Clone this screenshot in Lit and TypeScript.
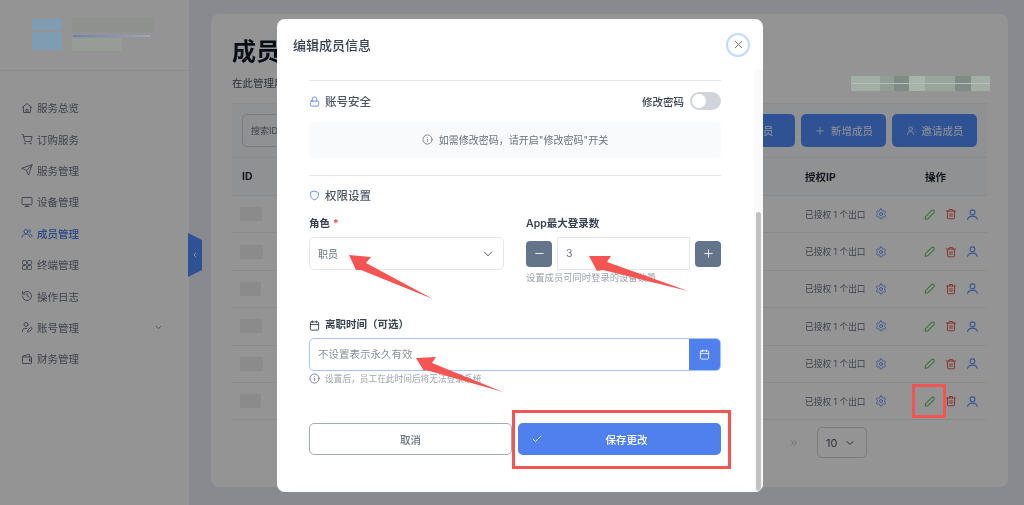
import { html, svg, css, LitElement } from 'lit';
import { customElement } from 'lit/decorators.js';

const icon = (inner: unknown, size = 12, sw = 2) => html`<svg class="ico" width=${size} height=${size} viewBox="0 0 24 24" fill="none" stroke="currentColor" stroke-width=${sw} stroke-linecap="round" stroke-linejoin="round">${inner}</svg>`;

const paths = {
  home: svg`<path d="M3 10.5 12 3l9 7.5"/><path d="M5 9v11a1 1 0 0 0 1 1h12a1 1 0 0 0 1-1V9"/><path d="M10 21v-6h4v6"/>`,
  cart: svg`<circle cx="8" cy="21" r="1"/><circle cx="19" cy="21" r="1"/><path d="M2 3h2.5l2.6 12.4a2 2 0 0 0 2 1.6h9.3a2 2 0 0 0 2-1.6L22 7H5.2"/>`,
  send: svg`<path d="m22 2-7 20-4-9-9-4Z"/><path d="M22 2 11 13"/>`,
  monitor: svg`<rect x="2" y="3" width="20" height="14" rx="2"/><path d="M8 21h8"/><path d="M12 17v4"/>`,
  users: svg`<circle cx="10" cy="9" r="4"/><path d="M2 20c1-4 4-6 8-6s7 2 8 6"/><path d="M16 5a4 4 0 0 1 1 7"/><path d="M19 14c1.500 1 2.500 3 3 5"/>`,
  grid: svg`<rect x="3" y="3" width="8" height="8" rx="2"/><rect x="13" y="3" width="8" height="8" rx="2"/><rect x="3" y="13" width="8" height="8" rx="2"/><rect x="13" y="13" width="8" height="8" rx="2"/>`,
  history: svg`<path d="M3 12a9 9 0 1 0 9-9 9.75 9.75 0 0 0-6.74 2.74L3 8"/><path d="M3 3v5h5"/><path d="M12 7v5l4 2"/>`,
  userPen: svg`<path d="M11.500 15H7a4 4 0 0 0-4 4v2"/><path d="M21.378 16.626a1 1 0 0 0-3.004-3.004l-4.010 4.012a2 2 0 0 0-.506.854l-.837 2.870a.5.5 0 0 0 .620.620l2.870-.837a2 2 0 0 0 .854-.506z"/><circle cx="10" cy="7" r="4"/>`,
  wallet: svg`<path d="M3 8h17a1 1 0 0 1 1 1v11a1 1 0 0 1-1 1H4a1 1 0 0 1-1-1V8Z"/><path d="M3 8c0-1 1-2 2-2.500L15 3h2v5"/><path d="M21 12h-4v4h4"/>`,
  chevronDown: svg`<path d="m6 9 6 6 6-6"/>`,
  chevronLeft: svg`<path d="m15 18-6-6 6-6"/>`,
  chevrons: svg`<path d="m6 17 5-5-5-5"/><path d="m13 17 5-5-5-5"/>`,
  plus: svg`<path d="M5 12h14"/><path d="M12 5v14"/>`,
  minus: svg`<path d="M5 12h14"/>`,
  userPlus: svg`<circle cx="10" cy="8" r="4"/><path d="M3 21a7 7 0 0 1 14 0"/><path d="M20 9v.01"/><path d="M20 14v.01"/>`,
  pencil: svg`<path d="M4 20.500l.8-4.500L16 4.800a2.800 2.800 0 0 1 4 4L8.800 20z"/>`,
  trash: svg`<path d="M3 6h18"/><path d="M9 6V3h6v3"/><path d="M5 6v14a1.500 1.500 0 0 0 1.500 1.500h11A1.500 1.500 0 0 0 19 20V6"/><path d="M10 11v6"/><path d="M14 11v6"/>`,
  user: svg`<circle cx="12" cy="8" r="4.500"/><path d="M3 21c1-4 4.500-6 9-6s8 2 9 6"/>`,
  gear: svg`<path d="M12.220 2h-.44a2 2 0 0 0-2 2v.18a2 2 0 0 1-1 1.730l-.43.25a2 2 0 0 1-2 0l-.15-.08a2 2 0 0 0-2.730.73l-.22.38a2 2 0 0 0 .73 2.730l.15.1a2 2 0 0 1 1 1.720v.51a2 2 0 0 1-1 1.740l-.15.09a2 2 0 0 0-.73 2.730l.22.38a2 2 0 0 0 2.730.73l.15-.08a2 2 0 0 1 2 0l.43.25a2 2 0 0 1 1 1.730V20a2 2 0 0 0 2 2h.44a2 2 0 0 0 2-2v-.18a2 2 0 0 1 1-1.730l.43-.25a2 2 0 0 1 2 0l.15.08a2 2 0 0 0 2.730-.73l.22-.39a2 2 0 0 0-.73-2.730l-.15-.08a2 2 0 0 1-1-1.740v-.5a2 2 0 0 1 1-1.740l.15-.09a2 2 0 0 0 .73-2.730l-.22-.38a2 2 0 0 0-2.730-.73l-.15.08a2 2 0 0 1-2 0l-.43-.25a2 2 0 0 1-1-1.730V4a2 2 0 0 0-2-2z"/><circle cx="12" cy="12" r="3"/>`,
  x: svg`<path d="M18 6 6 18"/><path d="m6 6 12 12"/>`,
  lock: svg`<rect x="3" y="11" width="18" height="11" rx="3"/><path d="M7 11V7a5 5 0 0 1 10 0v4"/>`,
  shield: svg`<path d="M12 2.500 20.500 5.500v6c0 5-3.500 8.500-8.500 10-5-1.500-8.500-5-8.500-10v-6z"/>`,
  info: svg`<circle cx="12" cy="12" r="10"/><path d="M12 16v-4"/><path d="M12 8h.01"/>`,
  calendar: svg`<path d="M8 2v4"/><path d="M16 2v4"/><rect x="3" y="4" width="18" height="18" rx="2"/><path d="M3 10h18"/>`,
  check: svg`<path d="M20 6 9 17l-5-5"/>`,
};

const nav = [
  ['服务总览', paths.home],
  ['订购服务', paths.cart],
  ['服务管理', paths.send],
  ['设备管理', paths.monitor],
  ['成员管理', paths.users],
  ['终端管理', paths.grid],
  ['操作日志', paths.history],
  ['账号管理', paths.userPen],
  ['财务管理', paths.wallet],
];

const idWidths = [22, 23, 21, 22, 23, 21];

@customElement('app-root')
export class AppRoot extends LitElement {
  static styles = css`
    :host {
      display: block;
      width: 1024px;
      height: 505px;
      overflow: hidden;
      position: relative;
      font-family: Inter, "Noto Sans CJK SC", sans-serif;
      background: #eceef9;
      color: #374151;
      filter: blur(0.35px);
    }
    .ico { display: block; flex: none; }
    .page { display: flex; height: 505px; }

    /* sidebar */
    .side { width: 189px; flex: none; background: #fff; position: relative; }
    .brand { height: 71px; border-bottom: 1px solid #f0f1f3; box-sizing: border-box; }
    .nav { padding-top: 21px; }
    .nav-item {
      height: 31.4px;
      padding-left: 21px;
      padding-right: 26px;
      display: flex;
      align-items: center;
      gap: 4px;
      font-size: 10.500px;
      color: #6b7280;
    }
    .nav-item.on { color: #4a7be6; font-weight: 500; }
    .nav-item .grow { flex: 1; }
    .tab {
      position: absolute;
      left: 188px;
      top: 233px;
      width: 14px;
      height: 44px;
      background: #528eff;
      clip-path: polygon(0 0, 100% 16%, 100% 84%, 0 100%);
      color: #fff;
      display: flex;
      align-items: center;
      justify-content: center;
    }

    /* card behind the dialog */
    .main { flex: 1; padding: 14px 16px 18px 22px; }
    .card {
      height: 473px;
      box-sizing: border-box;
      background: #fff;
      border-radius: 8px;
      padding: 22px 21px 0;
    }
    .title { font-size: 24px; line-height: 32px; font-weight: 700; color: #111827; }
    .sub { margin-top: 9px; height: 14px; display: flex; justify-content: space-between; font-size: 10.500px; line-height: 14px; color: #4b5563; }
    .toolbar {
      margin-top: 12px;
      height: 55px;
      box-sizing: border-box;
      padding: 0 10px;
      background: #f9fafb;
      border-top: 1px solid #f0f1f3;
      border-bottom: 1px solid #eceef1;
      display: flex;
      align-items: center;
      gap: 6px;
    }
    .search {
      width: 300px;
      height: 33px;
      box-sizing: border-box;
      border: 1px solid #d1d5db;
      border-radius: 5px;
      padding-left: 8px;
      margin-right: auto;
      display: flex;
      align-items: center;
      font-size: 9px;
      color: #6b7280;
    }
    .tbtn {
      width: 85px;
      height: 33px;
      border-radius: 5px;
      background: #528eff;
      color: #fff;
      font-size: 10.500px;
      display: flex;
      align-items: center;
      justify-content: center;
      gap: 5px;
    }
    .row { display: flex; align-items: center; height: 37.4px; box-sizing: border-box; border-bottom: 1px solid #eceef1; padding-left: 8px; font-size: 8.700px; color: #6b7280; }
    .row.head { height: 38px; background: #f9fafb; font-size: 10.500px; font-weight: 700; color: #1f2937; padding-left: 10px; }
    .c-id { width: 565px; }
    .row.head .c-id { width: 563px; }
    .c-ip { width: 118px; display: flex; align-items: center; gap: 9px; }
    .row.head .c-ip { width: 120px; }
    .gear { color: #5f95ff; }
    .ops { display: flex; align-items: center; gap: 9px; }
    .green { color: #63c26f; }
    .red { color: #ec5f55; }
    .blue { color: #5f95ff; }
    .pager { display: flex; align-items: center; justify-content: flex-end; gap: 18px; padding: 7px 120px 0 0; color: #9ca3af; }
    .size { width: 50px; height: 31px; box-sizing: border-box; border: 1px solid #d1d5db; border-radius: 5px; padding: 0 10px 0 8px; display: flex; align-items: center; justify-content: space-between; font-size: 11px; color: #4b5563; }

    /* blurred-out values sit above the dim layer with their final colours */
    .mosaic { position: relative; z-index: 20; filter: blur(0.6px); }
    .logo { position: absolute; left: 32px; top: 19px; width: 30px; display: flex; flex-direction: column; gap: 2px; }
    .logo i { display: block; background: #7f9db2; }
    .logo i:first-child { height: 11px; }
    .logo i:last-child { height: 18px; }
    .brand-text { position: absolute; left: 72px; top: 18px; width: 82px; }
    .bt1 { height: 14px; background: #8f918f; }
    .bt2 { height: 2px; margin: 3px 4px 0 1px; background: linear-gradient(90deg, #6a7fb4, #a3a7b0); }
    .bt3 { height: 13px; width: 50px; margin-top: 1px; background: #979c97; }
    .id-mask { height: 14px; background: #8b8b8b; }
    .tile {
      width: 139px;
      height: 15px;
      margin: -1px -3px 0 0;
      background:
        linear-gradient(#0000 0 46%, #b4c2b6 46% 56%, #0000 56%),
        linear-gradient(90deg, #a3afa6 0 21%, #919e95 21% 31%, #7f8b85 31% 42%, #a8b4a9 42% 53%, #98a59b 53% 75%, #7f8b85 75% 86%, #a2aea4 86%);
    }

    /* dialog */
    .overlay {
      position: absolute;
      inset: 0;
      z-index: 10;
      background: rgba(0, 0, 0, 0.42);
      padding: 19px 0 0 277px;
    }
    .modal {
      width: 486px;
      height: 473px;
      background: #fff;
      border-radius: 8px;
      display: flex;
      flex-direction: column;
      overflow: hidden;
    }
    .m-head { height: 51px; flex: none; padding: 0 13px 0 16px; display: flex; align-items: center; justify-content: space-between; font-size: 13px; font-weight: 500; color: #374151; }
    .close { width: 24px; height: 24px; box-sizing: border-box; border: 2px solid #bfdbfe; border-radius: 50%; display: flex; align-items: center; justify-content: center; color: #6b7280; }
    .m-body { flex: 1; display: flex; min-height: 0; }
    .content { flex: 1; padding: 10px 33px 0 32px; }
    .rule { height: 1px; background: #e5e7eb; }
    .rule.second { margin-top: 17px; }
    .sec { height: 22px; margin-top: 10px; padding-bottom: 2px; box-sizing: border-box; display: flex; align-items: center; gap: 5px; font-size: 11.500px; font-weight: 500; color: #4b5563; }
    .sec.perm { margin-top: 9px; }
    .sec .ico { color: #5b8cf0; }
    .toggle-wrap { margin-left: auto; display: flex; align-items: center; gap: 6px; font-size: 10.500px; color: #374151; }
    .toggle { width: 31px; height: 18px; border-radius: 9px; background: #d1d5db; padding: 2px; box-sizing: border-box; }
    .toggle i { display: block; width: 14px; height: 14px; border-radius: 50%; background: #fff; }
    .notice { margin-top: 9px; height: 36px; padding-bottom: 2px; box-sizing: border-box; border-radius: 5px; background: #f9fafb; display: flex; align-items: center; justify-content: center; gap: 6px; font-size: 10px; color: #6b7280; }
    .grid { display: grid; grid-template-columns: 195px 195px; gap: 0 22px; margin-top: 10px; }
    .label { height: 14px; line-height: 14px; font-size: 10.500px; font-weight: 600; color: #374151; }
    .req { color: #ef4444; margin-left: 3px; }
    .ctl { margin-top: 6px; }
    .select { height: 33px; box-sizing: border-box; border: 1px solid #e5e7eb; border-radius: 5px; padding: 0 8px; display: flex; align-items: center; justify-content: space-between; font-size: 10px; color: #6b7280; }
    .stepper { display: flex; align-items: center; gap: 5px; }
    .step { width: 26px; height: 26px; flex: none; border-radius: 4px; background: #64748b; color: #e5e7eb; display: flex; align-items: center; justify-content: center; }
    .num { flex: 1; height: 33px; box-sizing: border-box; border: 1px solid #e5e7eb; padding-left: 8px; display: flex; align-items: center; font-size: 10.500px; color: #6b7280; }
    .hint { margin-top: 2px; height: 11px; line-height: 11px; font-size: 9.300px; color: #9ca3af; white-space: nowrap; }
    .leave { margin-top: 35px; display: flex; align-items: center; gap: 5px; color: #374151; }
    .date { margin-top: 6px; height: 33px; box-sizing: border-box; border: 1px solid #a9c4f8; border-radius: 5px; display: flex; overflow: hidden; }
    .date .ph { flex: 1; padding: 0 0 2px 8px; display: flex; align-items: center; font-size: 10.500px; color: #8b929c; }
    .date .pick { width: 31px; background: #4f80ed; color: #fff; display: flex; align-items: center; justify-content: center; }
    .date-hint { margin-top: 1px; height: 12px; display: flex; align-items: center; gap: 5px; font-size: 8.700px; color: #9ca3af; }
    .date-hint .ico { color: #6b7280; }
    .actions { margin-top: 39px; display: grid; grid-template-columns: 1fr 1fr; gap: 6px; }
    .btn { height: 32px; box-sizing: border-box; border-radius: 5px; display: flex; align-items: center; justify-content: center; font-size: 10.500px; font-weight: 500; position: relative; }
    .cancel { border: 1.5px solid #a5abb5; color: #6b7280; }
    .save { background: #4f80ed; color: #fff; padding-left: 14px; }
    .save .ico { position: absolute; left: 13px; top: 10px; }
    .track { width: 9px; flex: none; background: #fafafa; padding: 142px 2px 1px; box-sizing: border-box; }
    .thumb { height: 100%; border-radius: 3px; background: #c1c1c1; }

    /* red review marks drawn on the screenshot */
    .marks { position: absolute; left: 0; top: 0; z-index: 30; pointer-events: none; }
  `;

  render() {
    return html`
      <div class="page">
        <aside class="side">
          <div class="brand"></div>
          <div class="logo mosaic"><i></i><i></i></div>
          <div class="brand-text mosaic"><div class="bt1"></div><div class="bt2"></div><div class="bt3"></div></div>
          <nav class="nav">
            ${nav.map(([label, p], i) => html`
              <div class="nav-item ${i === 4 ? 'on' : ''}">
                ${icon(p, 12, 1.800)}<span>${label}</span>
                ${i === 7 ? html`<span class="grow"></span>${icon(paths.chevronDown, 9)}` : ''}
              </div>`)}
          </nav>
          <div class="tab">${icon(paths.chevronLeft, 8, 3)}</div>
        </aside>
        <main class="main">
          <section class="card">
            <div class="title">成员</div>
            <div class="sub"><span>在此管理用户账号</span><div class="tile mosaic"></div></div>
            <div class="toolbar">
              <div class="search">搜索ID、用户名</div>
              <div class="tbtn">导入成员</div>
              <div class="tbtn">${icon(paths.plus, 12, 1.500)}新增成员</div>
              <div class="tbtn">${icon(paths.userPlus, 11, 1.800)}邀请成员</div>
            </div>
            <div class="row head"><div class="c-id">ID</div><div class="c-ip">授权IP</div><div>操作</div></div>
            ${idWidths.map(w => html`
              <div class="row">
                <div class="c-id"><div class="id-mask mosaic" style="width:${w}px"></div></div>
                <div class="c-ip">已授权 1 个出口 <span class="gear">${icon(paths.gear, 12, 1.800)}</span></div>
                <div class="ops">
                  <span class="green">${icon(paths.pencil, 13, 2)}</span>
                  <span class="red">${icon(paths.trash, 12, 2)}</span>
                  <span class="blue">${icon(paths.user, 13, 2)}</span>
                </div>
              </div>`)}
            <div class="pager">
              ${icon(paths.chevrons, 10, 1.800)}
              <div class="size"><span>10</span>${icon(paths.chevronDown, 12, 2)}</div>
            </div>
          </section>
        </main>
      </div>

      <div class="overlay">
        <div class="modal">
          <div class="m-head">
            <span>编辑成员信息</span>
            <div class="close">${icon(paths.x, 13, 1.800)}</div>
          </div>
          <div class="m-body">
            <div class="content">
              <div class="rule"></div>
              <div class="sec">
                ${icon(paths.lock, 11, 2)}账号安全
                <div class="toggle-wrap">修改密码<div class="toggle"><i></i></div></div>
              </div>
              <div class="notice">${icon(paths.info, 11, 1.800)}如需修改密码，请开启"修改密码"开关</div>
              <div class="rule second"></div>
              <div class="sec perm">${icon(paths.shield, 11, 2)}权限设置</div>
              <div class="grid">
                <div>
                  <div class="label">角色<span class="req">*</span></div>
                  <div class="select ctl"><span>职员</span>${icon(paths.chevronDown, 14, 1.800)}</div>
                </div>
                <div>
                  <div class="label">App最大登录数</div>
                  <div class="stepper ctl">
                    <div class="step">${icon(paths.minus, 13, 2)}</div>
                    <div class="num">3</div>
                    <div class="step">${icon(paths.plus, 13, 2)}</div>
                  </div>
                  <div class="hint">设置成员可同时登录的设备数量</div>
                </div>
              </div>
              <div class="label leave">${icon(paths.calendar, 11, 2)}离职时间（可选）</div>
              <div class="date">
                <div class="ph">不设置表示永久有效</div>
                <div class="pick">${icon(paths.calendar, 11, 1.800)}</div>
              </div>
              <div class="date-hint">${icon(paths.info, 11, 1.800)}设置后，员工在此时间后将无法登录系统</div>
              <div class="actions">
                <div class="btn cancel">取消</div>
                <div class="btn save">${icon(paths.check, 12, 1.500)}保存更改</div>
              </div>
            </div>
            <div class="track"><div class="thumb"></div></div>
          </div>
        </div>
      </div>

      <svg class="marks" width="1024" height="505" viewBox="0 0 1024 505" fill="#f65353">
        <polygon points="349,255 371,257 366,263 433,299 361,270 362,270 356,270" />
        <polygon points="589,256 611,256 607,262 688,291 603,270 597,271" />
        <polygon points="416,358 436,357 432,363 503,392 426,370 424,371" />
        <g fill="none" stroke="#f65353" stroke-width="3">
          <rect x="513.500" y="411.500" width="216" height="56" />
          <rect x="913.500" y="385.500" width="31" height="31" />
        </g>
      </svg>
    `;
  }
}

declare global {
  interface HTMLElementTagNameMap {
    'app-root': AppRoot;
  }
}
